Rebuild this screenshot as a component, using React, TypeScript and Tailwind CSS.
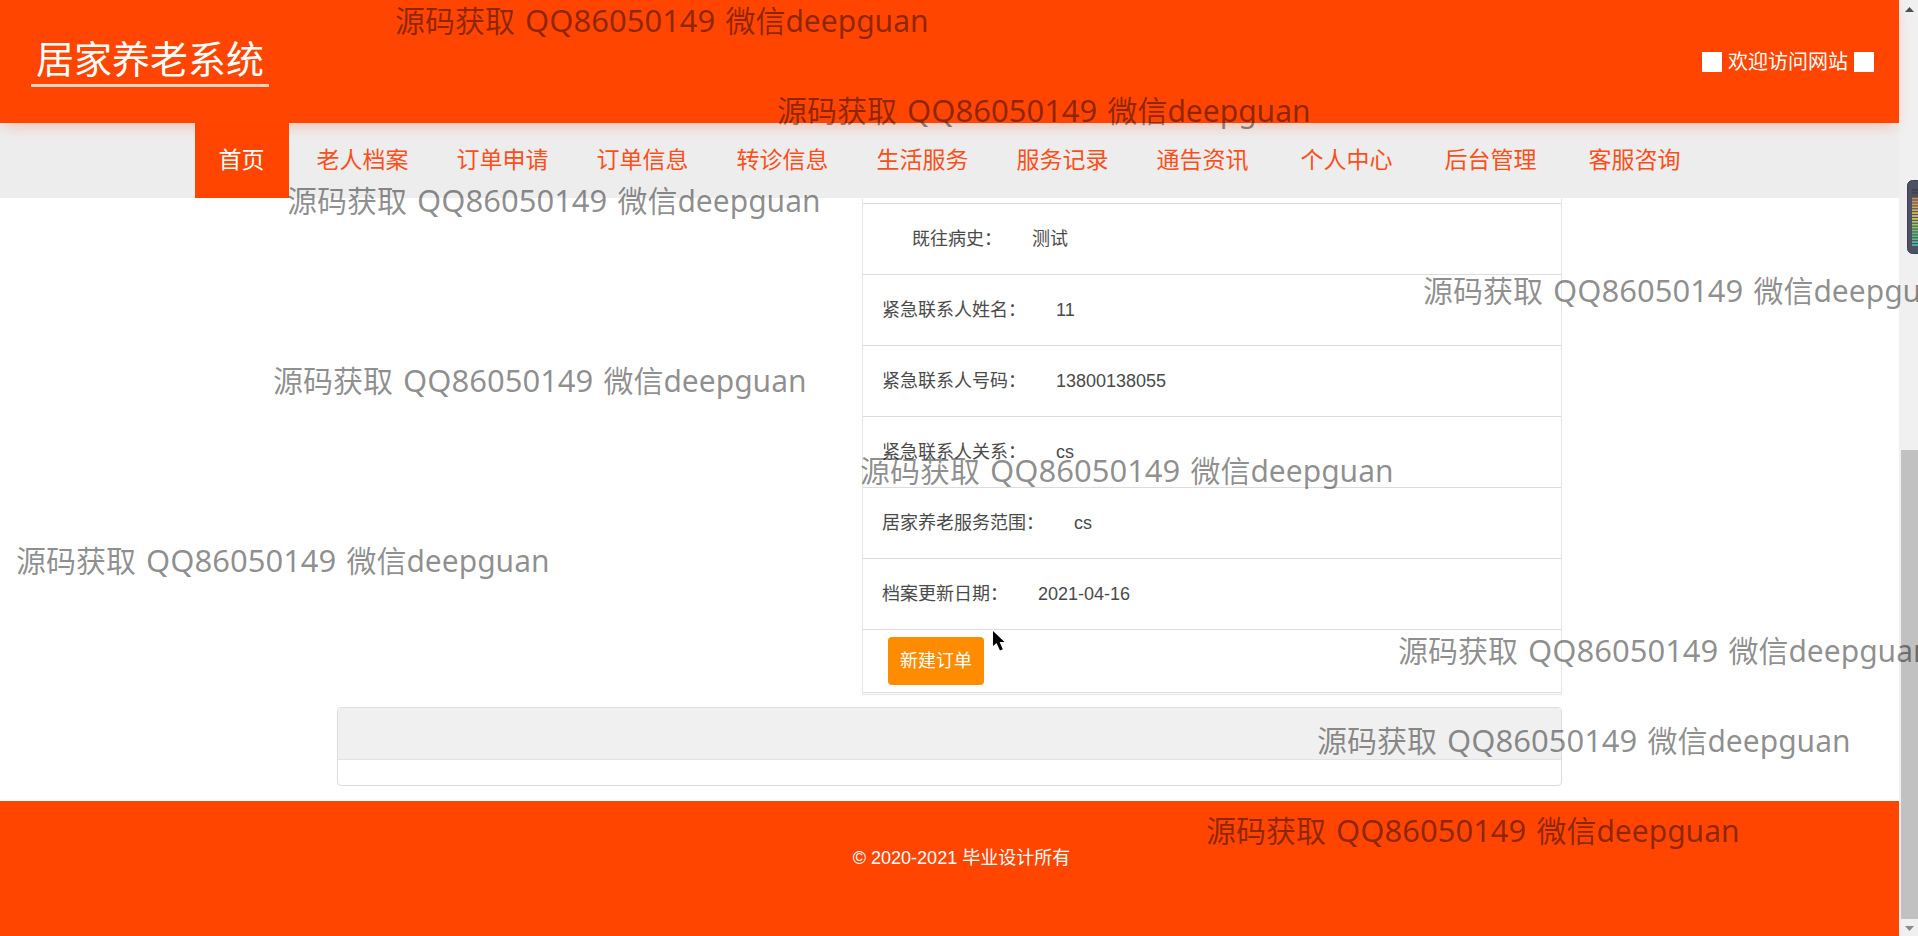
import React from "react";

const navItems = [
  { label: "首页", active: true, spaced: true },
  { label: "老人档案" },
  { label: "订单申请" },
  { label: "订单信息" },
  { label: "转诊信息" },
  { label: "生活服务" },
  { label: "服务记录" },
  { label: "通告资讯", spaced: true },
  { label: "个人中心", spaced: true },
  { label: "后台管理", spaced: true },
  { label: "客服咨询" },
];

const details = [
  { label: "既往病史：", value: "测试", indent: true },
  { label: "紧急联系人姓名：", value: "11" },
  { label: "紧急联系人号码：", value: "13800138055" },
  { label: "紧急联系人关系：", value: "cs" },
  { label: "居家养老服务范围：", value: "cs" },
  { label: "档案更新日期：", value: "2021-04-16" },
];

const watermarks = [
  "left-[395px] -top-px",
  "left-[777px] top-[89px]",
  "left-[287px] top-[179px]",
  "left-[1423px] top-[269px]",
  "left-[273px] top-[359px]",
  "left-[860px] top-[449px]",
  "left-[16px] top-[539px]",
  "left-[1398px] top-[629px]",
  "left-[1317px] top-[719px]",
  "left-[1206px] top-[809px]",
];

function Header() {
  return (
    <header className="relative z-10 flex h-[123px] items-center justify-between bg-[#ff4500] pr-[25px] pl-[31px] text-white shadow-[0_6px_14px_-4px_rgba(255,69,0,0.3)]">
      <h1 className="border-b-[3px] border-white/75 px-[5px] text-[38px] leading-[48px]">居家养老系统</h1>
      <p className="flex items-center gap-[6px] text-[20px] leading-6">
        <span className="size-5 bg-white" />
        欢迎访问网站
        <span className="size-5 bg-white" />
      </p>
    </header>
  );
}

function Nav() {
  return (
    <nav className="bg-[#ededed]">
      <ul className="flex justify-center text-[23px] leading-[75px] whitespace-nowrap">
        {navItems.map((item) => (
          <li key={item.label} className={item.spaced ? "mr-1" : ""}>
            <a
              href="#"
              className={
                item.active
                  ? "block bg-[#ff4500] px-6 text-white"
                  : "block px-6 text-[#f9501a]"
              }
            >
              {item.label}
            </a>
          </li>
        ))}
      </ul>
    </nav>
  );
}

function Main() {
  return (
    <main className="mx-auto w-full max-w-[1225px] pb-[15px]">
      <section className="ml-auto w-4/7 border-x border-b border-[#e6e6e6] pt-[5px] pb-[1px] text-[18px]">
        <dl>
          {details.map((row) => (
            <div
              key={row.label}
              className={
                row.indent
                  ? "flex h-[71px] items-center gap-[30px] border-t border-[#dcdcdc] pl-[49px]"
                  : "flex h-[71px] items-center gap-[30px] border-t border-[#dcdcdc] pl-[19px]"
              }
            >
              <dt className="text-[#4a4a4a]">{row.label}</dt>
              <dd className="text-[#4a4a4a]">{row.value}</dd>
            </div>
          ))}
        </dl>
        <div className="border-y border-[#dcdcdc] px-[25px] py-[7px]">
          <button type="button" className="h-12 rounded-[4px] bg-[#ff8c00] px-3 text-[18px] text-white">
            新建订单
          </button>
        </div>
      </section>
      <section className="mt-3 rounded-[4px] border border-[#dcdcdc]">
        <div className="h-[52px] border-b border-[#e3e3e3] bg-[#f0f0f0]" />
        <div className="h-[25px]" />
      </section>
    </main>
  );
}

function ScrollBar() {
  return (
    <div className="flex w-[19px] shrink-0 flex-col items-center bg-[#f0f0f0] pl-[2px]" aria-hidden="true">
      <svg width="9" height="17" viewBox="0 0 9 17" className="shrink-0">
        <path d="M0 12 L4.5 7 L9 12 Z" fill="#505050" />
      </svg>
      <div className="flex w-full grow flex-col justify-end">
        <div className="h-[52%] bg-[#c1c1c1]" />
      </div>
      <svg width="9" height="17" viewBox="0 0 9 17" className="shrink-0">
        <path d="M0 7 L9 7 L4.5 12 Z" fill="#8a8a8a" />
      </svg>
    </div>
  );
}

const barColors = [
  "#3f4250", "#3f4250", "#5a4a4a", "#c98a5a", "#d9925c", "#d99a5c", "#d8a25c", "#d6ac5e", "#d4b65f", "#d2c060",
  "#c8c660", "#b4c662", "#a0c665", "#8cc46a", "#78c26e", "#68c074", "#5cbe7e", "#55bc8a", "#50ba98", "#4cb8a6",
];

function Meter() {
  return (
    <svg width="11" height="74" viewBox="0 0 11 74" className="absolute top-[180px] right-0" aria-hidden="true">
      <rect x="0.5" y="0.5" width="20" height="73" rx="5" fill="#4d5263" stroke="#3c4050" />
      {barColors.map((color, i) => (
        <rect key={i} x="5" y={9 + i * 2.9} width="6" height="1.8" fill={color} />
      ))}
    </svg>
  );
}

export default function App() {
  return (
    <div className="relative flex min-h-screen overflow-hidden bg-white font-['Liberation_Sans','Noto_Sans_CJK_SC',sans-serif]">
      <div className="flex min-w-0 grow flex-col">
        <Header />
        <Nav />
        <Main />
        <footer className="grow bg-[#ff4500] pt-11 pl-6 text-center text-[18px] leading-[26px] text-white">
          © 2020-2021 毕业设计所有
        </footer>
      </div>
      <ScrollBar />
      <Meter />
      {watermarks.map((place) => (
        <span
          key={place}
          className={`pointer-events-none absolute z-20 font-['Noto_Sans','Noto_Sans_CJK_SC',sans-serif] text-[31px] leading-[42px] whitespace-nowrap text-black/45 ${place}`}
        >
          <span className="mr-[2px] text-[30px]">源码获取</span> QQ86050149{" "}
          <span className="ml-[2px] text-[30px]">微信deepguan</span>
        </span>
      ))}
      <svg width="12" height="20" viewBox="0 0 12 20" className="absolute top-[631px] left-[993px] z-30" aria-hidden="true">
        <path d="M0 0 L0 15 L3.5 12 L7 19.5 L9.8 18.3 L6.6 11 L11.5 11 Z" fill="#000" />
      </svg>
    </div>
  );
}
